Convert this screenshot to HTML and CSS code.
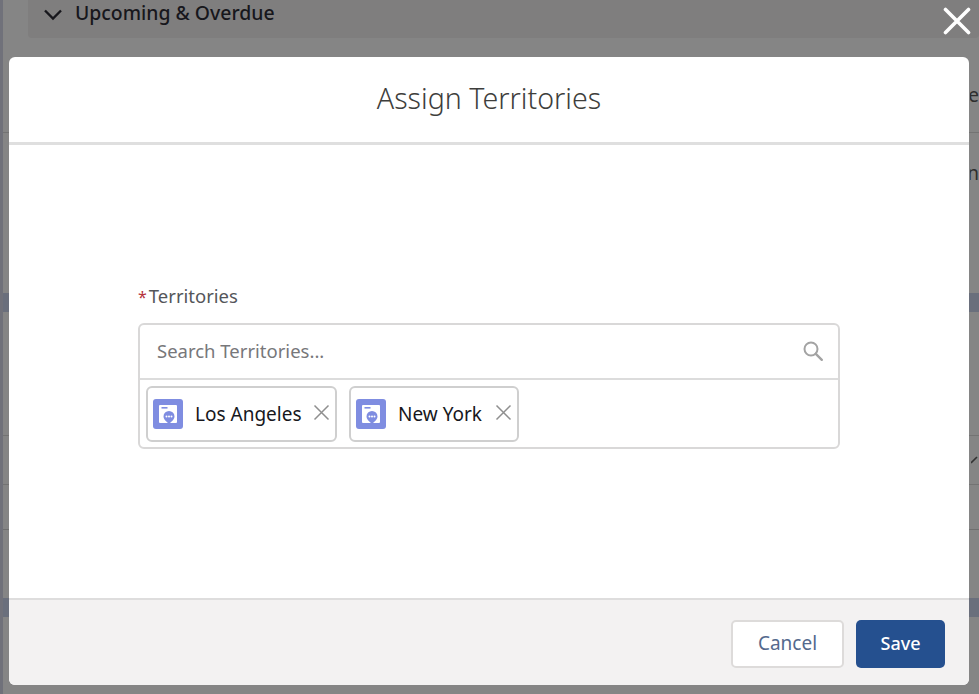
FILE: index.html
```html
<!DOCTYPE html>
<html lang="en">
<head>
<meta charset="utf-8">
<title>Assign Territories</title>
<link rel="stylesheet" href="styles.css">
</head>
<body>
<div class="backdrop">
  <div class="bg-card">
    <svg class="bg-chevron" width="20" height="13" viewBox="0 0 20 13"><path d="M2 2.500l8 8 8-8" fill="none" stroke="#17171c" stroke-width="2.400"/></svg>
    <span class="bg-card-title">Upcoming &amp; Overdue</span>
  </div>
  <div class="bg-row bg-r1"><span class="bg-text">he</span></div>
  <div class="bg-row bg-r2"><span class="bg-text">n</span></div>
  <div class="bg-band bg-b1"></div>
  <div class="bg-row bg-r3"></div>
  <div class="bg-row bg-r4">
    <svg class="bg-check" width="8" height="8" viewBox="0 0 8 8"><path d="M0 7L6 1" stroke="#333" stroke-width="1.600"/></svg>
  </div>
  <div class="bg-row bg-r5"></div>
  <div class="bg-row bg-r6"></div>
  <div class="bg-band bg-b2"></div>
</div>

<button class="modal-close" aria-label="Close">
  <svg width="28" height="28" viewBox="0 0 28 28"><path d="M2.500 2.500l23 23M25.500 2.500l-23 23" stroke="#fff" stroke-width="3.600" stroke-linecap="round"/></svg>
</button>

<section class="modal">
  <header class="modal-header"><h1 class="modal-title">Assign Territories</h1></header>
  <div class="modal-body">
    <div class="field-label"><span class="required">*</span>Territories</div>
    <div class="lookup">
      <div class="lookup-search">
        <span class="placeholder">Search Territories...</span>
        <svg class="search-icon" width="22" height="22" viewBox="0 0 22 22"><circle cx="9" cy="9" r="6.500" fill="none" stroke="#a3a3a3" stroke-width="2"/><path d="M13.800 13.800l6 6" stroke="#a3a3a3" stroke-width="2.400" stroke-linecap="round"/></svg>
      </div>
      <div class="pills">
        <div class="pill pill-la">
          <svg class="pill-icon" width="30" height="30" viewBox="0 0 30 30"><rect width="30" height="30" rx="3" fill="#7f8de1"/><path d="M7 6h16a1 1 0 0 1 1 1v16a1 1 0 0 1-1 1H7a1 1 0 0 1-1-1V7a1 1 0 0 1 1-1z" fill="#fff"/><rect x="8.500" y="8" width="6" height="1.600" fill="#7f8de1"/><path d="M16 12a5.500 5.500 0 0 1 5.500 5.500c0 3-3 5-5.500 7.500-2.500-2.500-5.500-4.500-5.500-7.500A5.500 5.500 0 0 1 16 12z" fill="#7f8de1"/><circle cx="13.500" cy="17.500" r="1" fill="#fff"/><circle cx="16" cy="17.500" r="1" fill="#fff"/><circle cx="18.500" cy="17.500" r="1" fill="#fff"/></svg>
          <span class="pill-label">Los Angeles</span>
          <svg class="pill-x" width="17" height="17" viewBox="0 0 17 17"><path d="M1.500 1.500l14 14M15.500 1.500l-14 14" stroke="#8f8f8f" stroke-width="1.500"/></svg>
        </div>
        <div class="pill pill-ny">
          <svg class="pill-icon" width="30" height="30" viewBox="0 0 30 30"><rect width="30" height="30" rx="3" fill="#7f8de1"/><path d="M7 6h16a1 1 0 0 1 1 1v16a1 1 0 0 1-1 1H7a1 1 0 0 1-1-1V7a1 1 0 0 1 1-1z" fill="#fff"/><rect x="8.500" y="8" width="6" height="1.600" fill="#7f8de1"/><path d="M16 12a5.500 5.500 0 0 1 5.500 5.500c0 3-3 5-5.500 7.500-2.500-2.500-5.500-4.500-5.500-7.500A5.500 5.500 0 0 1 16 12z" fill="#7f8de1"/><circle cx="13.500" cy="17.500" r="1" fill="#fff"/><circle cx="16" cy="17.500" r="1" fill="#fff"/><circle cx="18.500" cy="17.500" r="1" fill="#fff"/></svg>
          <span class="pill-label">New York</span>
          <svg class="pill-x" width="17" height="17" viewBox="0 0 17 17"><path d="M1.500 1.500l14 14M15.500 1.500l-14 14" stroke="#8f8f8f" stroke-width="1.500"/></svg>
        </div>
      </div>
    </div>
  </div>
  <footer class="modal-footer">
    <button class="btn btn-neutral">Cancel</button>
    <button class="btn btn-brand">Save</button>
  </footer>
</section>
</body>
</html>
```
FILE: styles.css
```css
* { box-sizing: border-box; }
html, body { margin: 0; height: 694px; overflow: hidden; }
body {
  position: relative;
  width: 979px;
  background: #858585;
  font-family: "Noto Sans", "Open Sans", sans-serif;
  color: #17171c;
}

.backdrop {
  height: 694px;
  display: flex;
  flex-direction: column;
  border-left: 3px solid #70717a;
}
.bg-card {
  height: 38px;
  margin-left: 25px;
  background: #7f7e7e;
  border-radius: 0 0 4px 4px;
  display: flex;
  align-items: center;
  padding: 0 0 4px 15px;
  gap: 12px;
}
.bg-card-title { font-size: 19.400px; font-weight: 500; color: #17171c; line-height: 24px; position: relative; top: -4px; }
.bg-chevron { position: relative; top: -3px; }
.bg-row { display: flex; justify-content: flex-end; align-items: center; }
.bg-text { font-size: 19px; line-height: 24px; color: #2e2e2e; width: 9px; overflow: hidden; direction: rtl; }
.bg-r1 { height: 95px; border-bottom: 1px solid #737373; padding-top: 20px; }
.bg-r2 { height: 160px; align-items: flex-start; padding-top: 28px; }
.bg-b1 { height: 19px; background: #6a6f7c; }
.bg-r3 { height: 124px; border-bottom: 1px solid #737373; }
.bg-r4 { height: 49px; border-bottom: 1px solid #737373; }
.bg-r5 { height: 45px; border-bottom: 1px solid #6f6f6f; }
.bg-r6 { height: 68px; }
.bg-b2 { height: 19px; background: #6a6f7c; }

.modal-close {
  position: absolute;
  left: 943px;
  top: 7px;
  width: 28px;
  height: 28px;
  padding: 0;
  border: 0;
  background: none;
  display: flex;
}

.modal {
  position: absolute;
  left: 9px;
  top: 57px;
  width: 960px;
  height: 628px;
  display: flex;
  flex-direction: column;
  background: #fff;
  border-radius: 6px;
  overflow: hidden;
}
.modal-header {
  height: 88px;
  border-bottom: 3px solid #dfdfdf;
  display: flex;
  align-items: center;
  justify-content: center;
  padding-bottom: 3px;
}
.modal-title { margin: 0; font-size: 28.600px; font-weight: 300; color: #3e3e3c; line-height: 36px; }

.modal-body { flex: 1; padding: 139px 129px 0 129px; }
.field-label { height: 24px; font-size: 18.500px; line-height: 24px; color: #54565a; margin-bottom: 15px; }
.required { color: #b5323c; margin-right: 2px; font-size: 16px; }

.lookup { border: 2px solid #d9d8d8; border-radius: 6px; height: 126px; }
.lookup-search {
  height: 55px;
  border-bottom: 2px solid #dcdcdc;
  display: flex;
  align-items: center;
  justify-content: space-between;
  padding: 0 6px 2px 17px;
}
.placeholder { font-size: 18.500px; color: #77777a; }
.search-icon { margin-right: 8px; }

.pills { display: flex; gap: 12px; padding: 6px 6px 0; }
.pill {
  height: 56px;
  border: 2px solid #cfcfcf;
  border-radius: 6px;
  display: flex;
  align-items: center;
  padding: 0 0 0 5px;
  background: #fff;
}
.pill-la { width: 191px; }
.pill-ny { width: 170px; }
.pill-icon { flex: none; }
.pill-label { font-size: 19px; color: #17171c; margin-left: 12px; flex: 1; white-space: nowrap; }
.pill-x { flex: none; margin: 0 5px 0 0; position: relative; top: -2px; }

.modal-footer {
  height: 87px;
  background: #f3f2f2;
  border-top: 2px solid #dedddd;
  display: flex;
  justify-content: flex-end;
  align-items: flex-start;
  gap: 12px;
  padding: 20px 24px 0 0;
}
.btn {
  height: 48px;
  border-radius: 5px;
  font-family: inherit;
  font-size: 19px;
  padding: 0 0 2px;
}
.btn-neutral { width: 113px; background: #fff; border: 2px solid #dddbda; color: #54698d; }
.btn-brand { width: 89px; background: #25508f; border: 0; color: #fff; font-weight: 500; font-size: 18px; }
```
